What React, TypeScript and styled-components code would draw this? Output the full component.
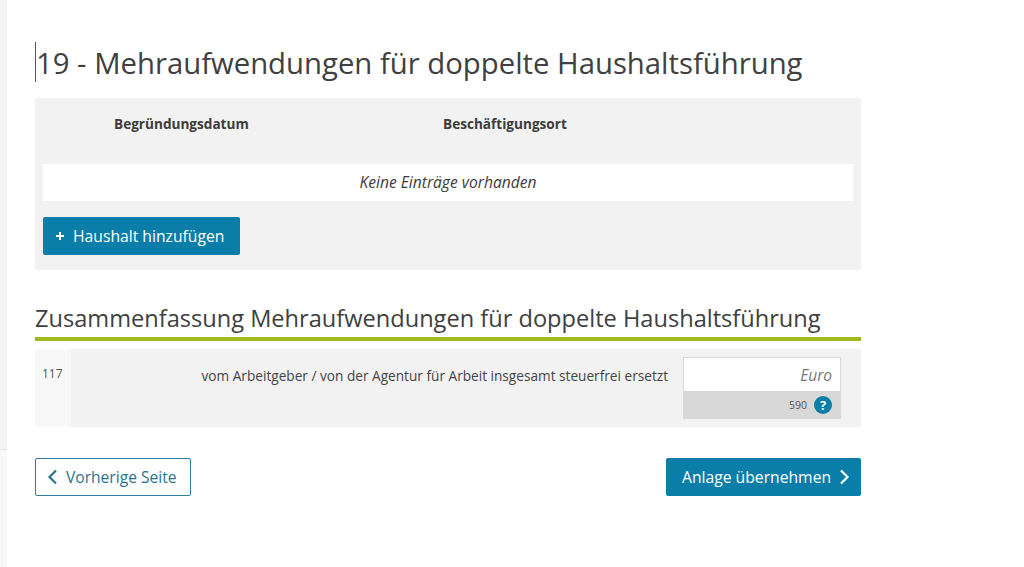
import React from 'react';
import styled, { createGlobalStyle } from 'styled-components';

const GlobalStyle = createGlobalStyle`
  html, body {
    margin: 0;
    padding: 0;
    background: #fff;
    font-family: "Open Sans", "Liberation Sans", sans-serif;
    color: #3c3c3c;
  }
`;

const Page = styled.div`
  display: flex;
  width: 1024px;
  height: 567px;
  overflow: hidden;
`;

const SideStrip = styled.div`
  flex: 0 0 7px;
  display: flex;
  flex-direction: column;
`;

const StripTop = styled.div`
  height: 449px;
  background: #f3f3f3;
  border-bottom: 1px solid #e6e6e6;
`;

const StripBottom = styled.div`
  flex: 1;
  background: #f8f8f8;
`;

const Main = styled.main`
  width: 826px;
  margin-left: 28px;
  padding-top: 42px;
`;

const Title = styled.h1`
  margin: 0 0 16px;
  height: 40px;
  line-height: 43px;
  font-size: 29.3px;
  font-weight: 400;
  color: #404040;
  border-left: 1px solid #555;
  white-space: nowrap;
`;

const Panel = styled.section`
  height: 172px;
  padding: 0 8px;
  box-sizing: border-box;
  background: #f2f2f2;
`;

const HeadRow = styled.div`
  display: flex;
  height: 66px;
  padding-top: 17px;
  box-sizing: border-box;
  font-size: 13.6px;
  line-height: 18px;
  font-weight: 700;
  color: #3c3c3c;
`;

const HeadCell = styled.div<{ $width: number; $indent: number }>`
  width: ${(p) => p.$width}px;
  padding-left: ${(p) => p.$indent}px;
  box-sizing: border-box;
`;

const EmptyRow = styled.div`
  height: 37px;
  line-height: 37px;
  background: #fff;
  text-align: center;
  font-size: 15.6px;
  font-style: italic;
  color: #3c3c3c;
`;

const PrimaryButton = styled.button`
  display: inline-flex;
  align-items: center;
  height: 38px;
  border: 0;
  border-radius: 2px;
  background: #0a7ea8;
  color: #fff;
  font-family: inherit;
  font-size: 15.7px;
  padding: 0;
  box-sizing: border-box;
`;

const AddButton = styled(PrimaryButton)`
  margin-top: 16px;
  width: 197px;
  padding-left: 13px;
  gap: 9px;
`;

const SubTitle = styled.h2`
  margin: 31px 0 0;
  height: 36px;
  line-height: 34px;
  font-size: 23.6px;
  font-weight: 400;
  color: #404040;
  border-bottom: 4px solid #9dbb1c;
  white-space: nowrap;
`;

const FieldRow = styled.div`
  display: flex;
  margin-top: 8px;
  height: 78px;
  background: #f8f8f8;
`;

const FieldNumber = styled.div`
  width: 36px;
  padding: 16px 0 0 7px;
  box-sizing: border-box;
  font-size: 12px;
  line-height: 17px;
  color: #555;
`;

const FieldBody = styled.div`
  flex: 1;
  display: flex;
  justify-content: space-between;
  padding: 8px 20px 0 0;
  background: #f2f2f2;
`;

const FieldLabel = styled.div`
  flex: 1;
  padding: 10px 15px 0 0;
  text-align: right;
  font-size: 13.65px;
  line-height: 18px;
  color: #444;
`;

const InputBox = styled.div`
  width: 158px;
  height: 62px;
  box-sizing: border-box;
  border: 1px solid #dadada;
  display: flex;
  flex-direction: column;
`;

const InputValue = styled.div`
  height: 33px;
  padding-right: 8px;
  background: #fff;
  text-align: right;
  font-size: 15.5px;
  line-height: 34px;
  font-style: italic;
  color: #777;
`;

const InputCode = styled.div`
  flex: 1;
  display: flex;
  align-items: center;
  justify-content: flex-end;
  gap: 7px;
  padding-right: 8px;
  background: #d8d8d8;
  font-size: 10.5px;
  color: #555;
`;

const HelpBadge = styled.span`
  width: 18px;
  height: 18px;
  border-radius: 50%;
  background: #0a7ea8;
  color: #fff;
  font-size: 13px;
  font-weight: 700;
  line-height: 18px;
  text-align: center;
`;

const NavRow = styled.nav`
  display: flex;
  justify-content: space-between;
  margin-top: 31px;
`;

const BackButton = styled.button`
  display: inline-flex;
  align-items: center;
  gap: 8px;
  width: 156px;
  height: 38px;
  padding: 0 0 0 11px;
  box-sizing: border-box;
  background: #fff;
  border: 1px solid #2f7f9c;
  border-radius: 2px;
  color: #2b7391;
  font-family: inherit;
  font-size: 15.6px;
`;

const NextButton = styled(PrimaryButton)`
  width: 195px;
  padding-left: 16px;
  gap: 8px;
`;

const Chevron = ({ dir }: { dir: 'left' | 'right' }) => (
  <svg width="11" height="16" viewBox="0 0 11 16" fill="none" stroke="currentColor" strokeWidth="2.2">
    <path d={dir === 'left' ? 'M9 1.5 2.5 8 9 14.5' : 'M2 1.5 8.5 8 2 14.5'} />
  </svg>
);

const Plus = () => (
  <svg width="8" height="8" viewBox="0 0 8 8" stroke="currentColor" strokeWidth="2">
    <path d="M4 0v8M0 4h8" />
  </svg>
);

function App() {
  return (
    <Page>
      <GlobalStyle />
      <SideStrip>
        <StripTop />
        <StripBottom />
      </SideStrip>
      <Main>
        <Title>19 - Mehraufwendungen für doppelte Haushaltsführung</Title>
        <Panel>
          <HeadRow>
            <HeadCell $width={330} $indent={71}>Begründungsdatum</HeadCell>
            <HeadCell $width={400} $indent={70}>Beschäftigungsort</HeadCell>
          </HeadRow>
          <EmptyRow>Keine Einträge vorhanden</EmptyRow>
          <AddButton>
            <Plus />
            Haushalt hinzufügen
          </AddButton>
        </Panel>
        <SubTitle>Zusammenfassung Mehraufwendungen für doppelte Haushaltsführung</SubTitle>
        <FieldRow>
          <FieldNumber>117</FieldNumber>
          <FieldBody>
            <FieldLabel>vom Arbeitgeber / von der Agentur für Arbeit insgesamt steuerfrei ersetzt</FieldLabel>
            <InputBox>
              <InputValue>Euro</InputValue>
              <InputCode>
                590
                <HelpBadge>?</HelpBadge>
              </InputCode>
            </InputBox>
          </FieldBody>
        </FieldRow>
        <NavRow>
          <BackButton>
            <Chevron dir="left" />
            Vorherige Seite
          </BackButton>
          <NextButton>
            Anlage übernehmen
            <Chevron dir="right" />
          </NextButton>
        </NavRow>
      </Main>
    </Page>
  );
}

export default App;
